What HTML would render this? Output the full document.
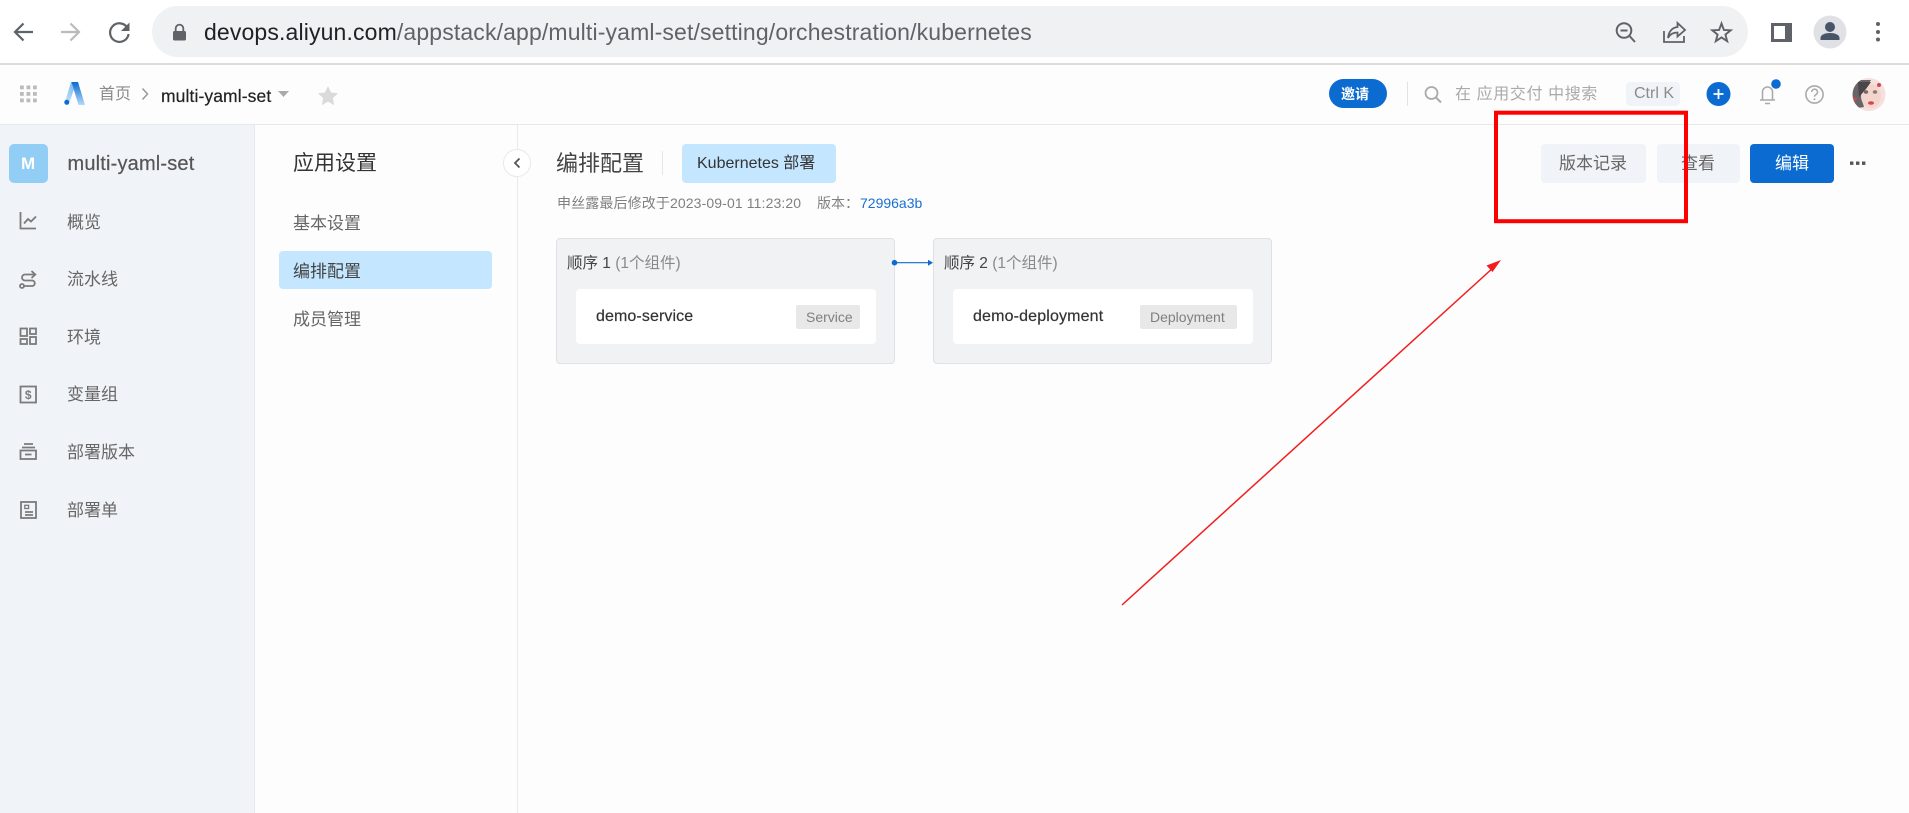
<!DOCTYPE html>
<html lang="zh"><head><meta charset="utf-8"><title>multi-yaml-set</title>
<style>
html,body{margin:0;padding:0;width:1909px;height:813px;overflow:hidden;background:#fdfdfd}
body{position:relative;font-family:"Liberation Sans","Noto Sans CJK SC",sans-serif}
.b{position:absolute}
.t{position:absolute;line-height:24px;height:24px;white-space:nowrap}
svg{position:absolute;left:0;top:0}
</style></head><body>
<!-- backgrounds -->
<div class="b" style="left:0;top:0;width:1909px;height:63px;background:#fff"></div>
<div class="b" style="left:0;top:63px;width:1909px;height:2px;background:#dcdcdc"></div>
<div class="b" style="left:152px;top:6px;width:1596px;height:51px;border-radius:26px;background:#f0f1f3"></div>
<div class="b" style="left:0;top:124px;width:1909px;height:1px;background:#e8e8e8"></div>
<div class="b" style="left:0;top:125px;width:254px;height:688px;background:#f0f3f7;border-right:1px solid #e6e8eb"></div>
<div class="b" style="left:517px;top:125px;width:1px;height:688px;background:#e8eaed"></div>
<div class="b" style="left:9px;top:144px;width:39px;height:39px;border-radius:5px;background:#92cdf6"></div>
<div class="b" style="left:279px;top:251px;width:213px;height:38px;border-radius:4px;background:#c4e6ff"></div>
<div class="b" style="left:682px;top:144px;width:154px;height:39px;border-radius:4px;background:#c4e6ff"></div>
<div class="b" style="left:662px;top:151px;width:1px;height:24px;background:#e6e6e6"></div>
<div class="b" style="left:1329px;top:79px;width:58px;height:29px;border-radius:15px;background:#0b6bd0"></div>
<div class="b" style="left:1407px;top:82px;width:1px;height:24px;background:#e2e2e2"></div>
<div class="b" style="left:1626px;top:82px;width:54px;height:24px;border-radius:4px;background:#f0f3f7"></div>
<div class="b" style="left:1541px;top:144px;width:105px;height:39px;border-radius:4px;background:#f0f3f7"></div>
<div class="b" style="left:1657px;top:144px;width:83px;height:39px;border-radius:4px;background:#f0f3f7"></div>
<div class="b" style="left:1750px;top:144px;width:84px;height:39px;border-radius:4px;background:#0b6bd0"></div>
<div class="b" style="left:556px;top:238px;width:337px;height:124px;border:1px solid #dfe1e6;border-radius:4px;background:#f1f2f4"></div>
<div class="b" style="left:933px;top:238px;width:337px;height:124px;border:1px solid #dfe1e6;border-radius:4px;background:#f1f2f4"></div>
<div class="b" style="left:576px;top:289px;width:300px;height:55px;border-radius:4px;background:#fff"></div>
<div class="b" style="left:953px;top:289px;width:300px;height:55px;border-radius:4px;background:#fff"></div>
<div class="b" style="left:796px;top:305px;width:64px;height:24px;border-radius:2px;background:#e8e8e8"></div>
<div class="b" style="left:1140px;top:305px;width:97px;height:24px;border-radius:2px;background:#e8e8e8"></div>

<svg width="1909" height="813" viewBox="0 0 1909 813" fill="none">
<defs>
<linearGradient id="g1" x1="0" y1="0" x2="0" y2="1"><stop offset="0" stop-color="#0b6bd0"/><stop offset="1" stop-color="#b5daf8"/></linearGradient>
<linearGradient id="g2" x1="1" y1="0" x2="0" y2="1"><stop offset="0" stop-color="#6fb3ee"/><stop offset="1" stop-color="#c4e2fa"/></linearGradient>
<clipPath id="av"><circle cx="1869" cy="94.5" r="16.5"/></clipPath>
</defs>
<!-- browser nav -->
<g stroke="#5f6368" stroke-width="2.2">
<path d="M33 32H15.5M23.5 23.5L15 32l8.5 8.5"/>
<path stroke="#b9bbbe" d="M61 32H78.5M70.5 23.5L79 32l-8.5 8.5"/>
<path d="M127.5 28A9.3 9.3 0 1 0 128.6 34"/>
</g>
<path d="M129.5 22.5V31h-8.5z" fill="#5f6368"/>
<rect x="173" y="31" width="13" height="9.5" rx="1.5" fill="#5f6368"/>
<path d="M175.7 31v-2.6a3.8 3.8 0 0 1 7.6 0V31" stroke="#5f6368" stroke-width="1.8"/>
<!-- address bar right -->
<g stroke="#5f6368" stroke-width="2">
<circle cx="1624" cy="30.5" r="7.3"/><path d="M1620.5 30.5h7M1629.5 36l5.5 6"/>
<path stroke-width="1.8" d="M1664 31v11h20v-6M1668 38c.5-6 4-10.500 9.500-11v-4l7.500 7-7.500 6.500v-4c-4 0-7.500 1.500-9.500 5.500z"/>
<path stroke-width="1.9" stroke-linejoin="miter" d="M1721.500 23.500l2.400 6.500 6.800.3-5.300 4.300 1.800 6.600-5.700-3.800-5.700 3.800 1.800-6.600-5.300-4.300 6.800-.3z"/>
</g>
<rect x="1771" y="23" width="21" height="19" fill="#5f6368"/><rect x="1774" y="26" width="11" height="13" fill="#fff"/>
<circle cx="1830" cy="32" r="16.500" fill="#dfe1e5"/>
<circle cx="1830" cy="27" r="5" fill="#475569"/><path d="M1820.500 40v-2c0-3.500 5-5 9.500-5s9.500 1.500 9.500 5v2z" fill="#475569"/>
<g fill="#5f6368"><circle cx="1878" cy="24" r="2"/><circle cx="1878" cy="32" r="2"/><circle cx="1878" cy="39.500" r="2"/></g>
<!-- app header left -->
<g fill="#bbb">
<rect x="20" y="85.500" width="3.800" height="3.800"/><rect x="26.500" y="85.500" width="3.800" height="3.800"/><rect x="33" y="85.500" width="3.800" height="3.800"/>
<rect x="20" y="92" width="3.800" height="3.800"/><rect x="26.500" y="92" width="3.800" height="3.800"/><rect x="33" y="92" width="3.800" height="3.800"/>
<rect x="20" y="98.500" width="3.800" height="3.800"/><rect x="26.500" y="98.500" width="3.800" height="3.800"/><rect x="33" y="98.500" width="3.800" height="3.800"/>
</g>
<path d="M71 82h5.500L69.500 102H65z" fill="url(#g2)"/>
<path d="M71.500 82H78l7 23h-6.500z" fill="url(#g1)"/>
<circle cx="66.800" cy="102.300" r="2.500" fill="#0b6bd0"/>
<path d="M142.500 88.500l5 5.500-5 5.500" stroke="#999" stroke-width="1.500"/>
<path d="M278 91h11l-5.500 6z" fill="#aaa"/>
<path d="M328 86l3 6.500 7 .8-5.200 4.800 1.400 7-6.200-3.500-6.200 3.500 1.400-7-5.200-4.800 7-.8z" fill="#d9dadc"/>
<!-- app header right -->
<circle cx="1431.500" cy="93" r="6" stroke="#aaa" stroke-width="1.800"/><path d="M1436 97.500l5 5" stroke="#aaa" stroke-width="2"/>
<circle cx="1718.500" cy="94" r="12" fill="#0b6bd0"/><path d="M1713.500 94h10M1718.500 89v10" stroke="#fff" stroke-width="1.800"/>
<path d="M1760 100h15M1762.500 100v-8a5 5 0 0 1 10 0v8M1765 103.500h5" stroke="#aaa" stroke-width="1.600"/>
<circle cx="1776" cy="84" r="4.800" fill="#0b6bd0"/>
<circle cx="1814.500" cy="94.500" r="8.600" stroke="#aaa" stroke-width="1.600"/>
<path d="M1811.700 92a2.900 2.900 0 1 1 4.300 2.600c-1 .6-1.500 1-1.500 2.200" stroke="#aaa" stroke-width="1.500"/><circle cx="1814.500" cy="99.200" r="1" fill="#aaa"/>
<g clip-path="url(#av)">
<rect x="1852" y="77" width="34" height="35" fill="#f6dfdc"/>
<path d="M1852 80h19c-3 5-7 8-9 14-1 5 1 9 2 13l-12 2z" fill="#6a6468"/>
<ellipse cx="1871" cy="96" rx="10" ry="12" fill="#f3d5ce"/>
<path d="M1858 82h13l-5 7-7 8z" fill="#4a4649"/>
<ellipse cx="1866" cy="92" rx="2.200" ry="1.800" fill="#6f6a6a"/><ellipse cx="1875" cy="92" rx="2.200" ry="1.800" fill="#8a7a78"/>
<ellipse cx="1871" cy="103" rx="3" ry="1.800" fill="#d8454c"/>
<circle cx="1879" cy="85" r="2" fill="#c94a50"/><circle cx="1855" cy="99" r="1.800" fill="#c94a50"/>
</g>
<!-- sidebar icons -->
<g stroke="#7b7b7b" stroke-width="1.800">
<path d="M20.500 212v16.500H36M24 223.500l4-4.500 3 2.500 5-5"/>
<path d="M35 274.500H25a3 3 0 0 0 0 6h7.500a2.800 2.800 0 0 1 0 5.500H24M31.500 271l3.800 3.500-3.800 3.500"/><circle cx="22" cy="286" r="2"/>
<rect x="20.500" y="328.500" width="6.500" height="7.500"/><rect x="30" y="328.500" width="6" height="5.500"/><rect x="20.500" y="339" width="6.500" height="5"/><rect x="30" y="337" width="6" height="7"/>
<rect x="20.500" y="386.500" width="15.500" height="16"/>
<path d="M24 444h9M22 447.500h13"/><rect x="20.500" y="450.500" width="15.500" height="8.500"/><path d="M25 454.500h6.500"/>
<rect x="21" y="502" width="15" height="16"/><path d="M25 512h8M25 515h8"/><rect x="24.800" y="505.300" width="3.800" height="3.200" stroke-width="1.300"/>
</g>
<text x="28.200" y="399" text-anchor="middle" font-family="Liberation Sans" font-size="12" font-weight="700" fill="#7b7b7b">$</text>
<!-- collapse -->
<circle cx="517" cy="163" r="13.500" fill="#fff" stroke="#e6e8eb"/>
<path d="M519.500 158.500l-4.500 4.500 4.500 4.500" stroke="#555" stroke-width="1.800"/>
<!-- more -->
<g fill="#555"><rect x="1850" y="161.500" width="3.400" height="3.400"/><rect x="1856" y="161.500" width="3.400" height="3.400"/><rect x="1862" y="161.500" width="3.400" height="3.400"/></g>
<!-- connector -->
<circle cx="894.500" cy="262.700" r="2.800" fill="#0b6bd0"/>
<path d="M895 262.700h34" stroke="#0b6bd0" stroke-width="1.200"/><path d="M928 259.700l5 3-5 3z" fill="#0b6bd0"/>
</svg>

<!-- browser url -->
<div class="t" id="url" style="left:204px;top:20px;font-size:23px;color:#5f6368;letter-spacing:.14px"><span style="color:#202124">devops.aliyun.com</span>/appstack/app/multi-yaml-set/setting/orchestration/kubernetes</div>
<!-- app header text -->
<div class="t" style="left:99px;top:83px;font-size:16px;color:#8a8a8a">首页</div>
<div class="t" style="left:161px;top:84px;font-size:17.500px;color:#222;letter-spacing:.1px;-webkit-text-stroke:.2px #222">multi-yaml-set</div>
<div class="t" style="left:1341px;top:82px;font-size:14px;color:#fff;font-weight:700">邀请</div>
<div class="t" style="left:1455px;top:83px;font-size:16px;color:#aaa;letter-spacing:.6px">在 应用交付 中搜索</div>
<div class="t" style="left:1634px;top:82px;font-size:16px;color:#8c8c8c">Ctrl K</div>
<!-- sidebar text -->
<div class="t" style="left:21px;top:152px;font-size:17px;color:#fff;font-weight:700">M</div>
<div class="t" style="left:67.500px;top:152px;font-size:20px;color:#555;letter-spacing:.18px;-webkit-text-stroke:.2px #555">multi-yaml-set</div>
<div class="t" style="left:67px;top:211px;font-size:17px;color:#666">概览</div>
<div class="t" style="left:67px;top:268px;font-size:17px;color:#666">流水线</div>
<div class="t" style="left:67px;top:326px;font-size:17px;color:#666">环境</div>
<div class="t" style="left:67px;top:383px;font-size:17px;color:#666">变量组</div>
<div class="t" style="left:67px;top:441px;font-size:17px;color:#666">部署版本</div>
<div class="t" style="left:67px;top:499px;font-size:17px;color:#666">部署单</div>
<div class="t" style="left:293px;top:152px;font-size:21px;color:#333">应用设置</div>
<div class="t" style="left:293px;top:212px;font-size:17px;color:#666">基本设置</div>
<div class="t" style="left:293px;top:260px;font-size:17px;color:#444">编排配置</div>
<div class="t" style="left:293px;top:308px;font-size:17px;color:#666">成员管理</div>
<!-- main text -->
<div class="t" style="left:556px;top:152px;font-size:22px;color:#444">编排配置</div>
<div class="t" style="left:697px;top:152px;font-size:16px;color:#333">Kubernetes 部署</div>
<div class="t" style="left:557px;top:191px;font-size:14px;color:#808080;letter-spacing:.12px">申丝露最后修改于2023-09-01 11:23:20</div>
<div class="t" style="left:817px;top:191px;font-size:14px;color:#808080">版本：</div>
<div class="t" style="left:860px;top:191px;font-size:14px;color:#1b6fd1">72996a3b</div>
<div class="t" style="left:1559px;top:152px;font-size:17px;color:#666">版本记录</div>
<div class="t" style="left:1681px;top:152px;font-size:17px;color:#666">查看</div>
<div class="t" style="left:1775px;top:152px;font-size:17px;color:#fff">编辑</div>
<div class="t" style="left:567px;top:252px;font-size:15.500px;color:#444">顺序 1 <span style="color:#8a8a8a">(1个组件)</span></div>
<div class="t" style="left:944px;top:252px;font-size:15.500px;color:#444">顺序 2 <span style="color:#8a8a8a">(1个组件)</span></div>
<div class="t" style="left:596px;top:305px;font-size:16px;color:#333;letter-spacing:.1px;-webkit-text-stroke:.2px #333">demo-service</div>
<div class="t" style="left:973px;top:305px;font-size:16px;color:#333;letter-spacing:.15px;-webkit-text-stroke:.2px #333">demo-deployment</div>
<div class="t" style="left:806px;top:305px;font-size:14px;color:#808080">Service</div>
<div class="t" style="left:1150px;top:305px;font-size:14px;color:#808080">Deployment</div>

<!-- annotations -->
<svg width="1909" height="813" viewBox="0 0 1909 813" fill="none">
<rect x="1496" y="112.700" width="190" height="108.500" stroke="#fe0000" stroke-width="4"/>
<path d="M1122 605L1494 267" stroke="#f21c1c" stroke-width="1.500"/>
<path d="M1501 260l-14.500 5.500 6 6.500z" fill="#f21c1c"/>
</svg>
</body></html>
